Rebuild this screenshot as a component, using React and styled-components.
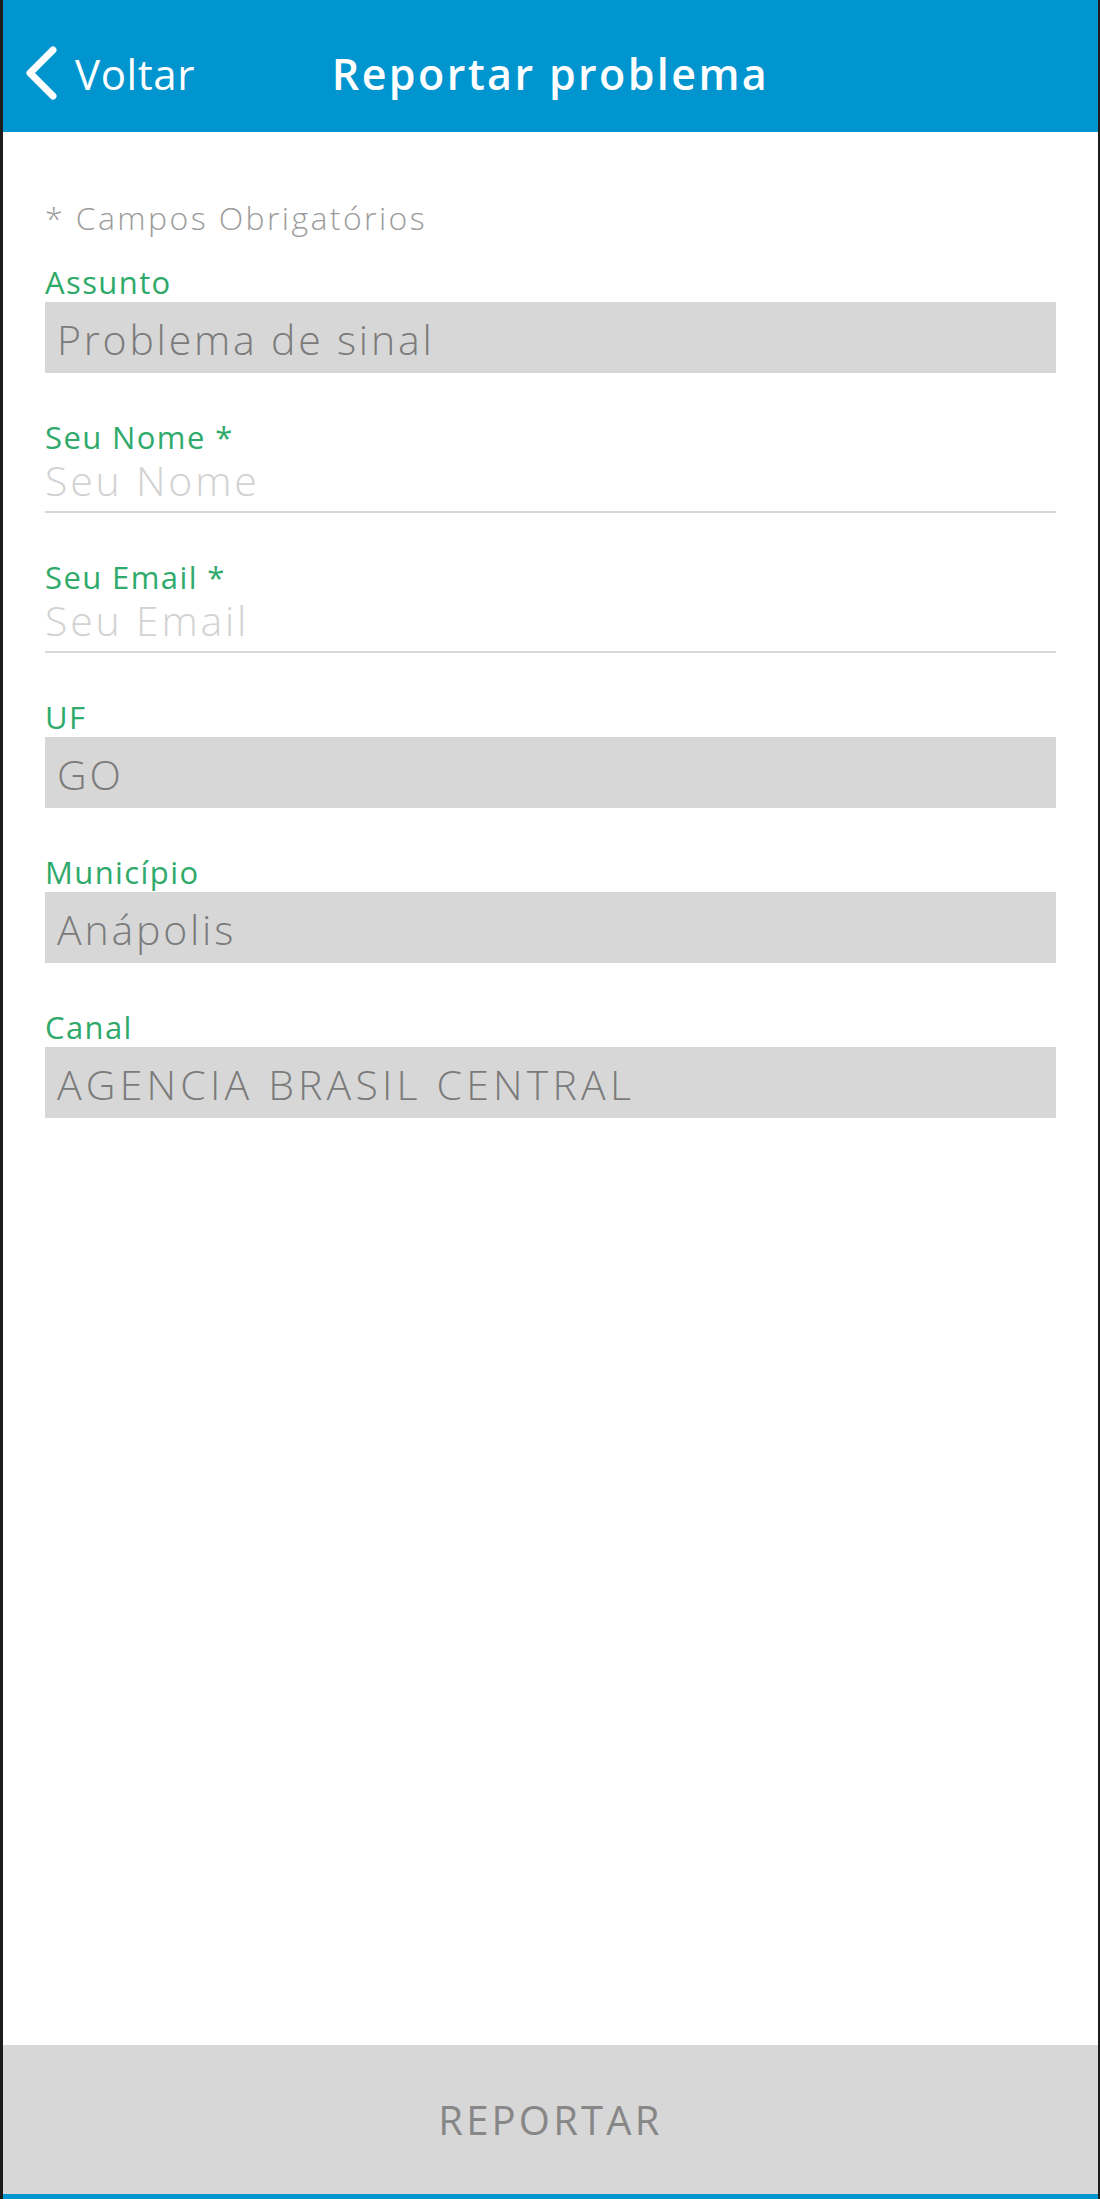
import React from "react";
import styled, { createGlobalStyle } from "styled-components";

const GlobalStyle = createGlobalStyle`
  html, body {
    margin: 0;
    padding: 0;
    background: #ffffff;
  }
  body {
    font-family: "Open Sans", "Noto Sans", "Liberation Sans", sans-serif;
  }
  * { box-sizing: border-box; }
`;

const Screen = styled.div`
  min-height: 2199px;
  display: flex;
  flex-direction: column;
  background: #ffffff;
  border-left: 3px solid #1c1c1c;
  border-right: 2px solid #1c1c1c;
`;

const Header = styled.header`
  height: 132px;
  background: #0095cf;
  display: grid;
  grid-template-columns: 1fr auto 1fr;
  align-items: center;
  padding: 14px 21px 0 21px;
  color: #ffffff;
`;

const BackButton = styled.button`
  justify-self: start;
  display: flex;
  align-items: center;
  gap: 17px;
  background: none;
  border: 0;
  padding: 0;
  color: #ffffff;
  font-family: inherit;
  font-size: 42px;
  font-weight: 400;
  letter-spacing: 0.6px;
  cursor: pointer;
`;

const Title = styled.h1`
  margin: 0;
  font-size: 43px;
  font-weight: 600;
  letter-spacing: 2.4px;
`;

const Content = styled.main`
  flex: 1;
  display: flex;
  flex-direction: column;
  gap: 46px;
  padding: 66px 42px 0 42px;
`;

const Required = styled.p`
  margin: 0 0 -20px;
  font-size: 32px;
  line-height: 40px;
  font-weight: 300;
  letter-spacing: 2.4px;
  color: #9c9c9c;
`;

const Field = styled.div`
  display: flex;
  flex-direction: column;
`;

const Label = styled.label`
  font-size: 31px;
  line-height: 36px;
  color: #2faa6a;
  letter-spacing: 1.4px;
  margin-bottom: ${(p) => (p.$boxed ? "2px" : "0")};
`;

const ValueBox = styled.div`
  height: 71px;
  background: #d7d7d7;
  display: flex;
  align-items: center;
  padding: 2px 0 0 12px;
  font-size: 41px;
  font-weight: 300;
  color: #7b7b7b;
  letter-spacing: ${(p) => (p.$caps ? "4.2px" : "2.8px")};
`;

const TextInput = styled.input`
  font-family: inherit;
  font-size: 41px;
  line-height: 50px;
  height: 58px;
  font-weight: 300;
  letter-spacing: 2.8px;
  border: 0;
  border-bottom: 2px solid #d8d8d8;
  padding: 0 0 6px 0;
  outline: none;
  background: transparent;
  color: #7b7b7b;
  &::placeholder {
    color: #d2d2d2;
  }
`;

const SubmitBar = styled.button`
  height: 149px;
  width: 100%;
  border: 0;
  background: #d7d7d7;
  color: #878787;
  font-family: inherit;
  font-size: 40px;
  font-weight: 400;
  letter-spacing: 3.2px;
  cursor: pointer;
`;

const BottomStrip = styled.div`
  height: 5px;
  background: #0095cf;
`;

const Chevron = () => (
  <svg width="34" height="54" viewBox="0 0 34 54" aria-hidden="true">
    <polyline
      points="29,4 6,27 29,50"
      fill="none"
      stroke="#ffffff"
      strokeWidth="7"
      strokeLinecap="round"
      strokeLinejoin="round"
    />
  </svg>
);

const fields = [
  { label: "Assunto", value: "Problema de sinal" },
  { label: "Seu Nome *", placeholder: "Seu Nome" },
  { label: "Seu Email *", placeholder: "Seu Email" },
  { label: "UF", value: "GO" },
  { label: "Município", value: "Anápolis" },
  { label: "Canal", value: "AGENCIA BRASIL CENTRAL", caps: true },
];

export default function App() {
  return (
    <>
      <GlobalStyle />
      <Screen>
        <Header>
          <BackButton>
            <Chevron />
            Voltar
          </BackButton>
          <Title>Reportar problema</Title>
          <span />
        </Header>
        <Content>
          <Required>* Campos Obrigatórios</Required>
          {fields.map((f) => (
            <Field key={f.label}>
              <Label $boxed={!f.placeholder}>{f.label}</Label>
              {f.placeholder ? (
                <TextInput placeholder={f.placeholder} />
              ) : (
                <ValueBox $caps={f.caps}>{f.value}</ValueBox>
              )}
            </Field>
          ))}
        </Content>
        <SubmitBar>REPORTAR</SubmitBar>
        <BottomStrip />
      </Screen>
    </>
  );
}
